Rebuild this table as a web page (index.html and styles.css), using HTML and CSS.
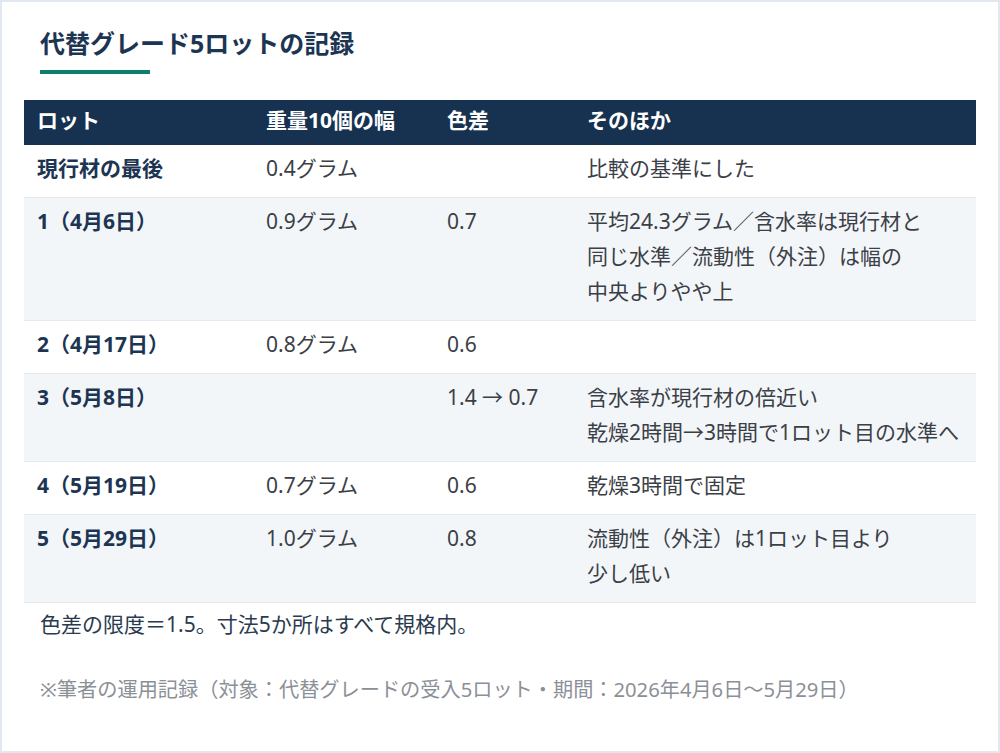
FILE: index.html
```html
<!DOCTYPE html>
<html lang="ja">
<head>
<meta charset="utf-8">
<title>代替グレード5ロットの記録</title>
<link rel="stylesheet" href="styles.css">
</head>
<body>
<div class="card">
  <h1 class="title">代替グレード5ロットの記録</h1>
  <div class="rule"></div>
  <table class="log">
    <colgroup>
      <col class="c1"><col class="c2"><col class="c3"><col class="c4">
    </colgroup>
    <thead>
      <tr><th>ロット</th><th>重量10個の幅</th><th>色差</th><th>そのほか</th></tr>
    </thead>
    <tbody>
      <tr><td class="lot">現行材の最後</td><td>0.4グラム</td><td></td><td>比較の基準にした</td></tr>
      <tr><td class="lot">1（4月6日）</td><td>0.9グラム</td><td>0.7</td><td>平均24.3グラム／含水率は現行材と<br>同じ水準／流動性（外注）は幅の<br>中央よりやや上</td></tr>
      <tr><td class="lot">2（4月17日）</td><td>0.8グラム</td><td>0.6</td><td></td></tr>
      <tr><td class="lot">3（5月8日）</td><td></td><td>1.4 → 0.7</td><td>含水率が現行材の倍近い<br>乾燥2時間→3時間で1ロット目の水準へ</td></tr>
      <tr><td class="lot">4（5月19日）</td><td>0.7グラム</td><td>0.6</td><td>乾燥3時間で固定</td></tr>
      <tr><td class="lot">5（5月29日）</td><td>1.0グラム</td><td>0.8</td><td>流動性（外注）は1ロット目より<br>少し低い</td></tr>
    </tbody>
  </table>
  <p class="note">色差の限度＝1.5。寸法5か所はすべて規格内。</p>
  <p class="source">※筆者の運用記録（対象：代替グレードの受入5ロット・期間：2026年4月6日〜5月29日）</p>
</div>
</body>
</html>
```

FILE: styles.css
```css
html, body {
  margin: 0;
  padding: 0;
  background: #ffffff;
}
body {
  font-family: "Noto Sans", "Noto Sans CJK JP", sans-serif;
  font-size: 21px;
  color: #3b4047;
}
.card {
  width: 1000px;
  height: 753px;
  box-sizing: border-box;
  border: 2px solid #e2e8f0;
  padding: 24px 22px;
  background: #ffffff;
}
.title {
  margin: 0 0 0 16px;
  font-size: 25px;
  line-height: 35px;
  font-weight: 700;
  color: #1c3553;
}
.rule {
  width: 110px;
  height: 4px;
  margin: 9px 0 0 16px;
  background: #0e7f6e;
}
.log {
  margin-top: 26px;
  width: 952px;
  border-collapse: collapse;
  table-layout: fixed;
}
.c1 { width: 229px; }
.c2 { width: 181px; }
.c3 { width: 140px; }
.c4 { width: 402px; }
.log th {
  background: #173150;
  color: #ffffff;
  font-weight: 700;
  text-align: left;
  line-height: 35px;
  padding: 3px 13px 7px;
}
.log td {
  text-align: left;
  vertical-align: top;
  line-height: 35px;
  padding: 6px 13px 11px;
  border-bottom: 1px solid #e6eaef;
}
.log tbody tr:nth-child(even) td {
  background: #f3f6f9;
}
.log td.lot {
  font-weight: 700;
  color: #1c3553;
}
.note {
  margin: 4px 0 0 16px;
  line-height: 35px;
  color: #2a3b4f;
}
.source {
  margin: 30px 0 0 16px;
  font-size: 20.2px;
  line-height: 35px;
  color: #8b9097;
}
```
